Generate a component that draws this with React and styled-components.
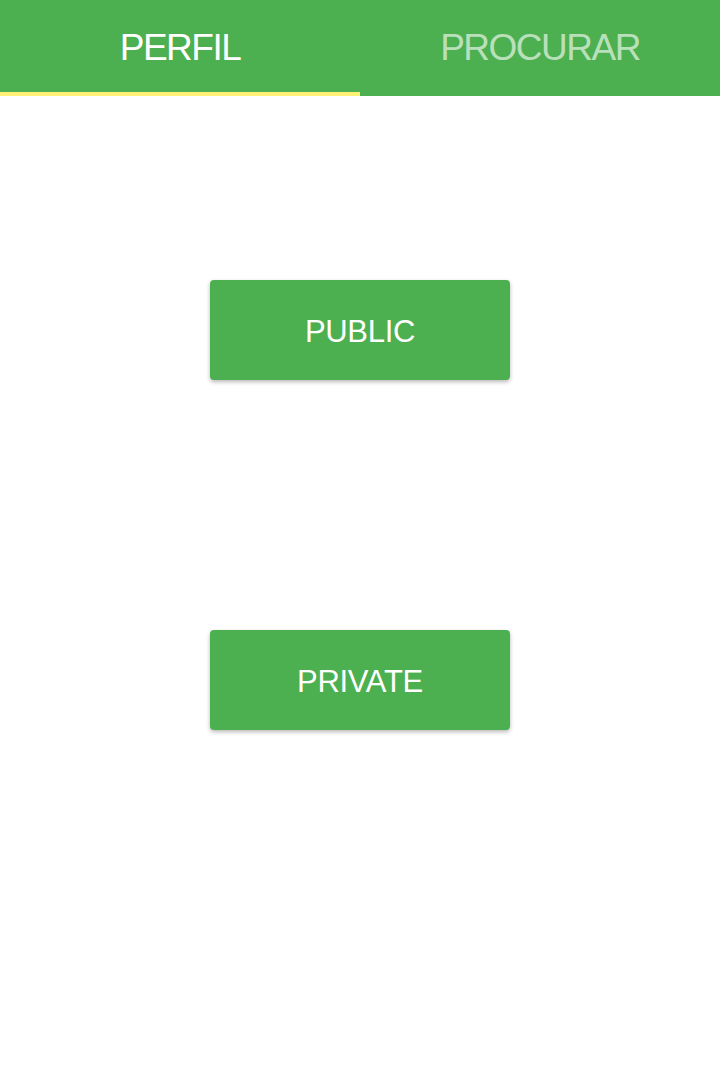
import React, { useState } from "react";
import styled, { createGlobalStyle } from "styled-components";

const GlobalStyle = createGlobalStyle`
  html, body {
    margin: 0;
    padding: 0;
    background: #ffffff;
    font-family: "Liberation Sans", Arial, sans-serif;
  }
`;

const Page = styled.div`
  display: flex;
  flex-direction: column;
  width: 720px;
  min-height: 1080px;
`;

const TabBar = styled.div`
  display: flex;
  height: 96px;
  background: #4caf50;
`;

const Tab = styled.div`
  flex: 1;
  display: flex;
  align-items: center;
  justify-content: center;
  padding-top: 4px;
  box-sizing: border-box;
  font-size: 37px;
  letter-spacing: -1.5px;
  color: ${(p) => (p.$active ? "#ffffff" : "#b9e0ba")};
  border-bottom: 4px solid ${(p) => (p.$active ? "#fff176" : "transparent")};
  cursor: pointer;
`;

const Content = styled.div`
  display: flex;
  flex-direction: column;
  align-items: center;
  gap: 250px;
  padding-top: 184px;
`;

const Button = styled.button`
  width: 300px;
  height: 100px;
  padding: 4px 0 0;
  border: none;
  border-radius: 4px;
  background: #4caf50;
  color: #ffffff;
  font-family: "Liberation Sans", Arial, sans-serif;
  font-size: 31px;
  letter-spacing: -0.3px;
  box-shadow: 0 2px 4px rgba(0, 0, 0, 0.28);
  cursor: pointer;
`;

const App = () => {
  const [tab, setTab] = useState(0);
  return (
    <Page>
      <GlobalStyle />
      <TabBar>
        <Tab $active={tab === 0} onClick={() => setTab(0)}>
          PERFIL
        </Tab>
        <Tab $active={tab === 1} onClick={() => setTab(1)}>
          PROCURAR
        </Tab>
      </TabBar>
      <Content>
        <Button>PUBLIC</Button>
        <Button>PRIVATE</Button>
      </Content>
    </Page>
  );
};

export default App;
